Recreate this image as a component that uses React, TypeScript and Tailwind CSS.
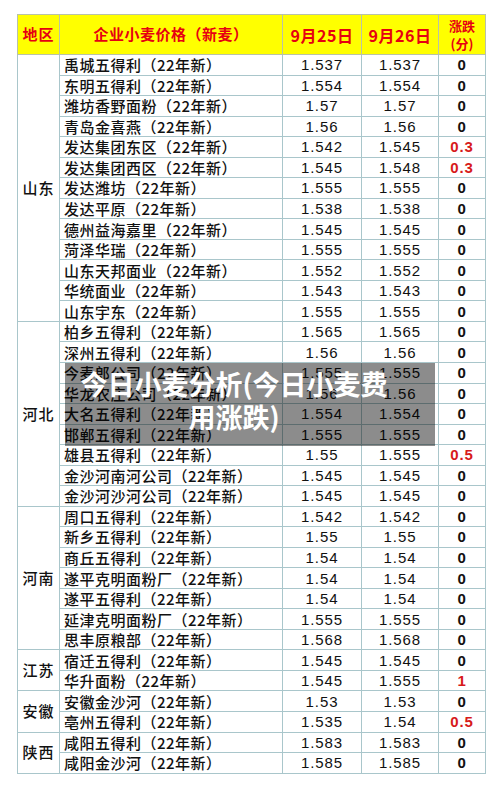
import React from "react";

type Row = [string, string, string, string];

interface Group {
  region: string;
  rows: Row[];
}

const groups: Group[] = [
  {
    region: "山东",
    rows: [
      ["禹城五得利", "1.537", "1.537", "0"],
      ["东明五得利", "1.554", "1.554", "0"],
      ["潍坊香野面粉", "1.57", "1.57", "0"],
      ["青岛金喜燕", "1.56", "1.56", "0"],
      ["发达集团东区", "1.542", "1.545", "0.3"],
      ["发达集团西区", "1.545", "1.548", "0.3"],
      ["发达潍坊", "1.555", "1.555", "0"],
      ["发达平原", "1.538", "1.538", "0"],
      ["德州益海嘉里", "1.545", "1.545", "0"],
      ["菏泽华瑞", "1.555", "1.555", "0"],
      ["山东天邦面业", "1.552", "1.552", "0"],
      ["华统面业", "1.543", "1.543", "0"],
      ["山东宇东", "1.555", "1.555", "0"],
    ],
  },
  {
    region: "河北",
    rows: [
      ["柏乡五得利", "1.565", "1.565", "0"],
      ["深州五得利", "1.56", "1.56", "0"],
      ["今麦郎公司", "1.555", "1.555", "0"],
      ["华龙农庄公司", "1.56", "1.56", "0"],
      ["大名五得利", "1.554", "1.554", "0"],
      ["邯郸五得利", "1.555", "1.555", "0"],
      ["雄县五得利", "1.55", "1.555", "0.5"],
      ["金沙河南河公司", "1.545", "1.545", "0"],
      ["金沙河沙河公司", "1.545", "1.545", "0"],
    ],
  },
  {
    region: "河南",
    rows: [
      ["周口五得利", "1.542", "1.542", "0"],
      ["新乡五得利", "1.55", "1.55", "0"],
      ["商丘五得利", "1.54", "1.54", "0"],
      ["遂平克明面粉厂", "1.54", "1.54", "0"],
      ["遂平五得利", "1.54", "1.54", "0"],
      ["延津克明面粉厂", "1.555", "1.555", "0"],
      ["思丰原粮部", "1.568", "1.568", "0"],
    ],
  },
  {
    region: "江苏",
    rows: [
      ["宿迁五得利", "1.545", "1.545", "0"],
      ["华升面粉", "1.545", "1.555", "1"],
    ],
  },
  {
    region: "安徽",
    rows: [
      ["安徽金沙河", "1.53", "1.53", "0"],
      ["亳州五得利", "1.535", "1.54", "0.5"],
    ],
  },
  {
    region: "陕西",
    rows: [
      ["咸阳五得利", "1.583", "1.583", "0"],
      ["咸阳金沙河", "1.585", "1.585", "0"],
    ],
  },
];

const cell = "border border-[#a9c6cb] p-0";
const head = "border border-[#b9c2a8] p-0 text-center font-bold text-[#e60012]";
const num = "font-['Liberation_Sans',Arial,sans-serif] text-[15px] leading-[19px] tracking-[0.9px] text-center";

export default function App() {
  return (
    <div className="relative min-h-[808px] w-[500px] bg-white pl-[17px] pt-[14px] font-['Noto_Sans_CJK_SC',sans-serif] text-[#111]">
      <table className="w-[468px] table-fixed border-collapse border border-[#93a9ae]">
        <colgroup>
          <col className="w-[42px]" />
          <col className="w-[223px]" />
          <col className="w-[79px]" />
          <col className="w-[77px]" />
          <col className="w-[47px]" />
        </colgroup>
        <thead>
          <tr className="h-[40px] bg-[#ffff00]">
            <th className={`${head} text-[15px] tracking-[1px]`}>地区</th>
            <th className={`${head} text-[15px] tracking-[0.5px]`}>企业小麦价格（新麦）</th>
            <th className={`${head} text-[16px] tracking-[0.5px]`}>9月25日</th>
            <th className={`${head} text-[16px] tracking-[0.5px]`}>9月26日</th>
            <th className={`${head} text-[13px] leading-[18px]`}>
              涨跌
              <br />
              (分)
            </th>
          </tr>
        </thead>
        <tbody>
          {groups.map((g) =>
            g.rows.map((r, i) => (
              <tr key={g.region + r[0]} className="h-[20.54px]">
                {i === 0 && (
                  <td
                    rowSpan={g.rows.length}
                    className={`${cell} border-[#9fb3b7] text-center align-middle text-[15px] font-medium tracking-[1px]`}
                  >
                    {g.region}
                  </td>
                )}
                <td className={`${cell} pl-[4px] text-[15px] font-medium leading-[19px] tracking-[0.5px] whitespace-nowrap`}>
                  {r[0]}（22年新）
                </td>
                <td className={`${cell} ${num}`}>{r[1]}</td>
                <td className={`${cell} ${num}`}>{r[2]}</td>
                <td
                  className={`${cell} ${num} font-bold ${
                    r[3] === "0" ? "text-[#111]" : "text-[#d71a1a]"
                  }`}
                >
                  {r[3]}
                </td>
              </tr>
            ))
          )}
        </tbody>
      </table>

      <div className="absolute left-[65px] top-[363px] h-[83px] w-[370px] bg-black/45 pl-[8px] pr-[40px] pt-[4px] text-center text-[27px] font-bold leading-[33px] text-white">
        今日小麦分析(今日小麦费用涨跌)
      </div>
    </div>
  );
}
